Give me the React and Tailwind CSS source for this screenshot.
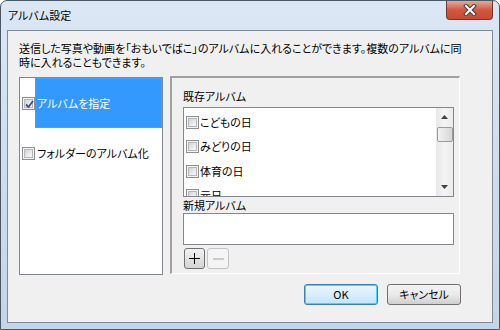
import React from 'react';

const jp = "font-['Noto_Sans_CJK_JP','Noto_Sans',sans-serif] [font-feature-settings:'palt']";

function CheckBox({ checked = false }) {
  return (
    <span className="relative flex h-[13px] w-[13px] shrink-0 border border-[#8e8f8f] bg-[#f4f4f4] p-px">
      <span className="block h-full w-full border border-[#b4b8bd] bg-gradient-to-br from-[#cfd2d6] via-[#e6e8ea] to-[#f8f8f8]" />
      {checked && (
        <svg className="absolute left-[1px] top-[1px]" width="11" height="11" viewBox="0 0 11 11">
          <path d="M2 5.5 L4.5 8 L9 2" fill="none" stroke="#3d4f86" strokeWidth="1.8" />
        </svg>
      )}
    </span>
  );
}

function CloseButton() {
  return (
    <div className="flex h-[19px] w-[47px] items-center justify-center rounded-b-[4px] border border-t-0 border-[#6b3a33] bg-gradient-to-b from-[#e8a797] via-[#d0583f] to-[#c94a2f]">
      <svg width="14" height="12" viewBox="0 0 14 12">
        <path d="M3 2 L11 10 M11 2 L3 10" stroke="#3f3f3f" strokeWidth="4" strokeLinecap="square" />
        <path d="M3 2 L11 10 M11 2 L3 10" stroke="#ffffff" strokeWidth="2" strokeLinecap="square" />
      </svg>
    </div>
  );
}

function ListItem({ label }) {
  return (
    <div className="flex h-[24.5px] shrink-0 items-center gap-px pl-[2px]">
      <CheckBox />
      <span className="whitespace-nowrap text-[11px] leading-none text-black">{label}</span>
    </div>
  );
}

function ScrollBar() {
  return (
    <div className="flex w-[17px] shrink-0 flex-col items-center bg-gradient-to-r from-[#e8e8e8] via-[#f4f4f4] to-[#eaeaea]">
      <div className="flex h-[18px] w-full items-center justify-center">
        <svg width="7" height="4" viewBox="0 0 7 4"><path d="M0 4 L3.5 0 L7 4 Z" fill="#3f3f3f" /></svg>
      </div>
      <div className="mt-px h-[15px] w-[16px] rounded-[2px] border border-[#9a9a9a] bg-gradient-to-r from-[#f2f2f2] to-[#d6d6d6]" />
      <div className="flex-1" />
      <div className="flex h-[18px] w-full items-center justify-center">
        <svg width="7" height="4" viewBox="0 0 7 4"><path d="M0 0 L7 0 L3.5 4 Z" fill="#3f3f3f" /></svg>
      </div>
    </div>
  );
}

export default function App() {
  return (
    <div className={`${jp} h-[330px] w-[500px] overflow-hidden bg-white`}>
      <div className="flex h-full w-full flex-col rounded-t-[7px] border border-[#4a5866] bg-gradient-to-b from-[#dbe7f4] via-[#cfdded] to-[#c4d5e8] px-[6px] pb-[6px]">
        {/* title bar */}
        <div className="flex h-[29px] shrink-0 items-start justify-between">
          <span className="mt-[9px] pl-px text-[11px] leading-none text-black">アルバム設定</span>
          <CloseButton />
        </div>

        {/* client area */}
        <div className="flex flex-1 flex-col border border-[#7d8b99] bg-[#f0f0f0] px-[11px] pt-[10px]">
          <p className="h-[35px] whitespace-nowrap text-[11px] leading-[14px] text-black">
            送信した写真や動画を「おもいでばこ」のアルバムに入れることができます。複数のアルバムに同
            <br />
            時に入れることもできます。
          </p>

          <div className="flex gap-[7px]">
            {/* left list */}
            <div className="mt-px flex h-[198px] w-[144px] flex-col border border-[#828790] bg-white">
              <div className="flex h-[50px] items-center">
                <span className="ml-[2px]"><CheckBox checked /></span>
                <span className="flex h-full flex-1 items-center border border-dotted border-[#d98a2a] bg-[#3399ff] pl-px text-[11px] leading-none text-white">
                  アルバムを指定
                </span>
              </div>
              <div className="flex h-[50px] items-center">
                <span className="ml-[2px]"><CheckBox /></span>
                <span className="pl-[2px] text-[11px] leading-none text-black">フォルダーのアルバム化</span>
              </div>
            </div>

            {/* right group */}
            <div className="flex h-[198px] w-[290px] flex-col border-t-2 border-l-2 border-b border-r border-t-[#a0a0a0] border-l-[#a0a0a0] border-b-white border-r-white pl-[11px] pr-[5px]">
              <div className="flex h-[29px] items-end pb-[5px] text-[11px] leading-none text-black">既存アルバム</div>
              <div className="flex h-[90px] border border-[#828790] bg-white">
                <div className="flex flex-1 flex-col overflow-hidden pt-[2px]">
                  <ListItem label="こどもの日" />
                  <ListItem label="みどりの日" />
                  <ListItem label="体育の日" />
                  <ListItem label="元日" />
                </div>
                <ScrollBar />
              </div>
              <div className="flex h-[16px] items-center text-[11px] leading-none text-black">新規アルバム</div>
              <div className="h-[32px] border border-[#828790] bg-white" />
              <div className="mt-[3px] flex gap-[2px] pl-px">
                <div className="flex h-[21px] w-[21px] items-center justify-center rounded-[3px] border border-[#707070] bg-gradient-to-b from-[#f2f2f2] to-[#d4d4d4]">
                  <svg width="11" height="11" viewBox="0 0 11 11"><path d="M5.5 0 V11 M0 5.5 H11" stroke="#000" strokeWidth="1" /></svg>
                </div>
                <div className="flex h-[21px] w-[22px] items-center justify-center rounded-[3px] border border-[#c3c3c3] bg-[#f4f4f4]">
                  <svg width="11" height="2" viewBox="0 0 11 2"><path d="M0 1 H11" stroke="#a0a0a0" strokeWidth="1" /></svg>
                </div>
              </div>
            </div>
          </div>

          {/* dialog buttons */}
          <div className="mt-[9px] flex justify-end gap-[9px] pr-[20px]">
            <button className="h-[21px] w-[74px] rounded-[3px] border border-[#3c7fb1] bg-gradient-to-b from-[#eaf6fd] via-[#d9eefa] to-[#bee6fd] text-[11px] leading-none text-black shadow-[inset_0_0_0_1px_#48d2ff]">
              OK
            </button>
            <button className="h-[21px] w-[74px] rounded-[3px] border border-[#707070] bg-gradient-to-b from-[#f2f2f2] via-[#ebebeb] to-[#cfcfcf] text-[11px] leading-none text-black">
              キャンセル
            </button>
          </div>
        </div>
      </div>
    </div>
  );
}
